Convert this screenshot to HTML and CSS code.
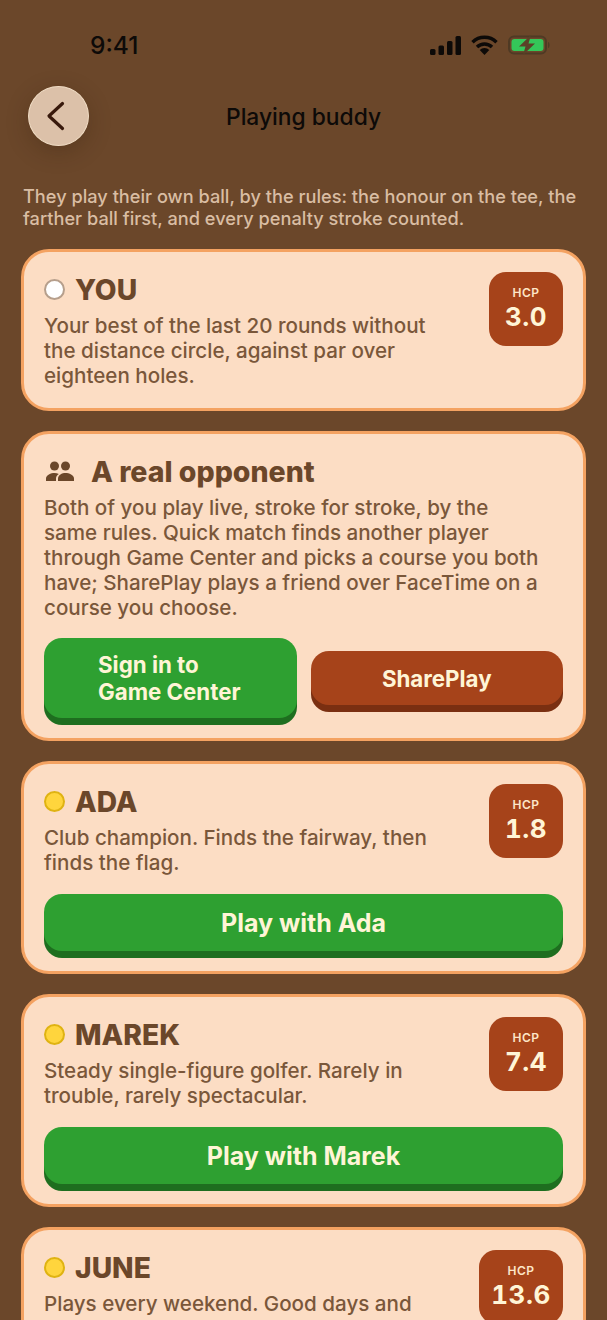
FILE: index.html
```html
<!DOCTYPE html>
<html lang="en">
  <head>
    <meta name="viewport" content="width=device-width, initial-scale=1" />
    <title>Playing buddy</title>
    <link rel="stylesheet" href="styles.css">
  </head>

  <body>
    <div class="status">
      <span class="time">9:41</span>
      <div class="status-icons">
        <svg width="31" height="19" viewBox="0 0 31 19">
          <rect x="0" y="13" width="5.5" height="6" rx="1.5" />
          <rect x="8.5" y="9.5" width="5.5" height="9.5" rx="1.5" />
          <rect x="17" y="5" width="5.5" height="14" rx="1.5" />
          <rect x="25.5" y="0" width="5.5" height="19" rx="1.5" />
        </svg>
        <svg width="27" height="20" viewBox="0 0 27 20">
          <path d="M1.5 7.2a17 17 0 0 1 24 0" class="wifi" />
          <path d="M6 12a10.700 10.700 0 0 1 15 0" class="wifi" />
          <path d="M13.500 20l-4.800-5a6.700 6.700 0 0 1 9.600 0z" />
        </svg>
        <svg width="43" height="20" viewBox="0 0 43 20">
          <rect x="1" y="1.500" width="37" height="17" rx="5" class="batt-case" />
          <rect x="3.500" y="4" width="32" height="12" rx="3" class="batt-fill" />
          <path d="M40 7c2 .4 2 5.600 0 6z" class="batt-cap" />
          <path d="M23 0L11 11.500h6.500L15 20l12-11.500h-6.500z" class="batt-bolt" />
        </svg>
      </div>
    </div>

    <div class="nav">
      <button class="back">
        <svg width="20" height="30" viewBox="0 0 20 30">
          <path d="M16.500 2.500L3 15l13.500 12.500" />
        </svg>
      </button>
      <h1 class="nav-title">Playing buddy</h1>
    </div>

    <p class="intro">They play their own ball, by the rules: the honour on the tee, the farther ball first, and every penalty stroke counted.</p>

    <div class="list">
      <div class="card">
        <div class="card-top">
          <div class="card-info">
            <div class="name"><span class="ball ball-white"></span>YOU</div>
            <p class="desc">Your best of the last 20 rounds without the distance circle, against par over eighteen holes.</p>
          </div>
          <div class="hcp"><span class="hcp-label">HCP</span><span class="hcp-value">3.0</span></div>
        </div>
      </div>

      <div class="card">
        <div class="name name-real">
          <svg class="people" width="30" height="24" viewBox="0 0 30 24">
            <circle cx="9.500" cy="6" r="4.500" />
            <circle cx="20.500" cy="6" r="4.500" />
            <path d="M1 21v-2.500c0-3.500 5-5.500 8.500-5.500 1.500 0 3 .3 4.300 1-1.800 1.200-2.800 2.800-2.800 4.500V21z" />
            <path d="M13 21v-2.500c0-3.500 4-5.500 7.500-5.500s8.500 2 8.500 5.500V21z" />
          </svg>
          A real opponent
        </div>
        <p class="desc">Both of you play live, stroke for stroke, by the<br />same rules. Quick match finds another player<br />through Game Center and picks a course you both<br />have; SharePlay plays a friend over FaceTime on a<br />course you choose.</p>
        <div class="btn-row">
          <button class="btn btn-green btn-signin"><span>Sign in to<br />Game Center</span></button>
          <button class="btn btn-rust">SharePlay</button>
        </div>
      </div>

      <div class="card">
        <div class="card-top">
          <div class="card-info">
            <div class="name"><span class="ball"></span>ADA</div>
            <p class="desc">Club champion. Finds the fairway, then finds the flag.</p>
          </div>
          <div class="hcp"><span class="hcp-label">HCP</span><span class="hcp-value">1.8</span></div>
        </div>
        <button class="btn btn-green btn-wide">Play with Ada</button>
      </div>

      <div class="card">
        <div class="card-top">
          <div class="card-info">
            <div class="name"><span class="ball"></span>MAREK</div>
            <p class="desc">Steady single-figure golfer. Rarely in trouble, rarely spectacular.</p>
          </div>
          <div class="hcp"><span class="hcp-label">HCP</span><span class="hcp-value">7.4</span></div>
        </div>
        <button class="btn btn-green btn-wide">Play with Marek</button>
      </div>

      <div class="card">
        <div class="card-top">
          <div class="card-info">
            <div class="name"><span class="ball"></span>JUNE</div>
            <p class="desc">Plays every weekend. Good days and</p>
          </div>
          <div class="hcp hcp-big"><span class="hcp-label">HCP</span><span class="hcp-value">13.6</span></div>
        </div>
      </div>
    </div>
  </body>
</html>
```

FILE: styles.css
```css
html, body {
  height: 1320px;
  overflow: hidden;
}

body {
  margin: 0;
  background-color: #6b472a;
  font-family: Inter, "Liberation Sans", sans-serif;
}

/* status bar */
.status {
  height: 62px;
  padding: 22px 56px 0 90px;
  box-sizing: border-box;
  display: flex;
  justify-content: space-between;
}

.time {
  font-size: 24.500px;
  line-height: 47px;
  font-weight: 500;
  color: #0d0a08;
}

.status-icons {
  display: flex;
  align-items: center;
  gap: 10px;
  height: 46px;
}

.status-icons svg {
  fill: #0d0a08;
  display: block;
}

.wifi {
  fill: none;
  stroke: #0d0a08;
  stroke-width: 3.400;
}

.batt-case {
  fill: none;
  stroke: #4f3a24;
  stroke-width: 2;
}

.batt-fill {
  fill: #34c759;
}

.status-icons .batt-cap {
  fill: #4f3a24;
}

.status-icons .batt-bolt {
  fill: #5a4227;
}

/* nav */
.nav {
  position: relative;
  height: 60px;
  margin-top: 24px;
  display: flex;
  align-items: center;
  justify-content: center;
}

.back {
  position: absolute;
  left: 28px;
  top: 0;
  width: 61px;
  height: 60px;
  padding: 0 6px 0 0;
  border: 1px solid #f0dcc4;
  border-radius: 50%;
  background: #dcc1a9;
  box-shadow: 0 6px 22px rgba(50, 30, 10, 0.28);
  display: flex;
  align-items: center;
  justify-content: center;
}

.back path {
  fill: none;
  stroke: #38190c;
  stroke-width: 3.200;
  stroke-linecap: round;
  stroke-linejoin: round;
}

.nav-title {
  margin: 0;
  font-size: 22.800px;
  font-weight: 500;
  color: #0d0a08;
}

.intro {
  margin: 39px 20px 0 23px;
  font-size: 18.200px;
  line-height: 22px;
  font-weight: 500;
  color: #d9bda3;
}

/* cards */
.list {
  margin: 20px 21px 0 21px;
  display: flex;
  flex-direction: column;
  gap: 20px;
}

.card {
  padding: 20px;
  border: 3px solid #f4a261;
  border-radius: 28px;
  background: #fcddc4;
}

.card-top {
  display: flex;
  justify-content: space-between;
  align-items: flex-start;
}

.card-info {
  width: 395px;
}

.name {
  display: flex;
  align-items: center;
  height: 35px;
  font-size: 28.200px;
  font-weight: 800;
  color: #6b472a;
}

.name-real {
  height: 35px;
  font-size: 28.500px;
}

.people {
  margin: 0 16px 0 1px;
  fill: #6b472a;
}

.ball {
  width: 17px;
  height: 17px;
  margin-right: 10px;
  border: 2px solid #dfb312;
  border-radius: 50%;
  background: #ffd53d;
  flex: none;
}

.ball-white {
  border-color: #b69f8c;
  background: #ffffff;
}

.desc {
  margin: 6px 0 0 0;
  font-size: 20.600px;
  line-height: 25px;
  font-weight: 450;
  color: #7a573a;
}

.hcp {
  width: 74px;
  height: 74px;
  border-radius: 17px;
  background: #a6431a;
  display: flex;
  flex-direction: column;
  align-items: center;
  flex: none;
}

.hcp-big {
  width: 84px;
}

.hcp-label {
  margin-top: 14px;
  font-size: 12px;
  line-height: 14px;
  font-weight: 600;
  letter-spacing: 0.5px;
  color: #fde6c8;
}

.hcp-value {
  margin-top: 2px;
  font-size: 26px;
  line-height: 30px;
  font-weight: 700;
  font-variant-numeric: tabular-nums;
  letter-spacing: 0.5px;
  color: #fff5d6;
}

/* buttons */
.btn {
  border: 0;
  padding: 0;
  border-radius: 18px;
  font-family: inherit;
  font-size: 22.300px;
  line-height: 27px;
  font-weight: 700;
  color: #fff5d6;
}

.btn-green {
  background: #2ea031;
  box-shadow: 0 7px 0 #1e6e1f;
}

.btn-rust {
  height: 54px;
  background: #a6431a;
  box-shadow: 0 7px 0 #7a2f11;
}

.btn-row {
  margin-top: 18px;
  display: flex;
  gap: 14px;
  align-items: center;
}

.btn-row .btn {
  flex: 1 1 0;
}

.btn-signin {
  height: 80px;
  text-align: left;
}

.btn-signin span {
  display: block;
  margin-left: 54px;
}

.btn-wide {
  display: block;
  width: 100%;
  height: 57px;
  margin-top: 19px;
  padding-top: 1px;
  font-size: 25px;
}
```
